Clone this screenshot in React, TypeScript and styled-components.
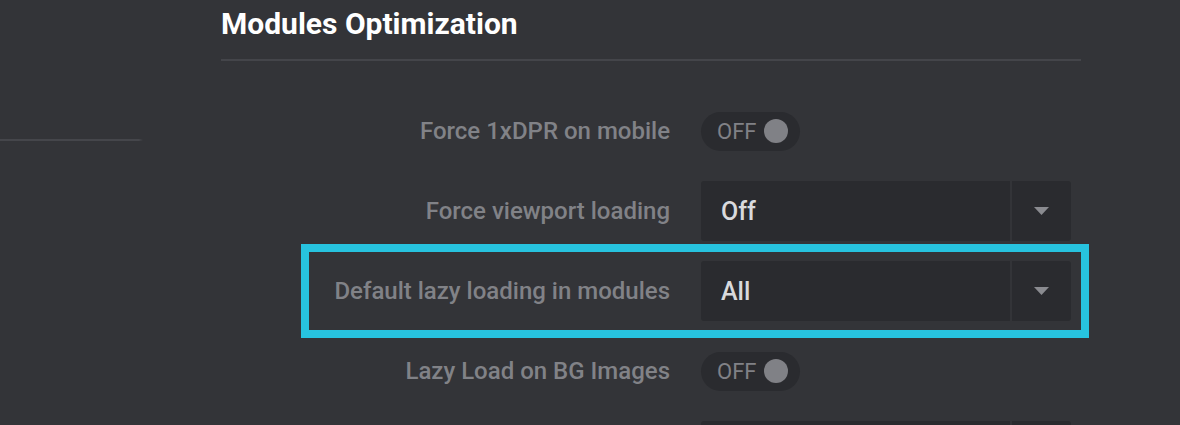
import React from "react";
import styled, { createGlobalStyle } from "styled-components";

const Global = createGlobalStyle`
  html, body { margin: 0; padding: 0; background: #333438; }
  body { font-family: Roboto, "Noto Sans", Arial, sans-serif; overflow: hidden; }
  * { box-sizing: border-box; }
`;

const Page = styled.div`
  width: 1180px;
  height: 425px;
  display: flex;
  background: #333438;
  overflow: hidden;
`;

const Sidebar = styled.aside`
  width: 143px;
  flex: none;
  padding-top: 139px;
`;

const SideRule = styled.div`
  height: 2px;
  background: linear-gradient(to right, #45464b 97%, rgba(69, 70, 75, 0));
`;

const Main = styled.main`
  margin-left: 78px;
  width: 860px;
  flex: none;
`;

const Title = styled.h2`
  margin: 0;
  padding-top: 4px;
  height: 61px;
  font-size: 30px;
  line-height: 40px;
  font-weight: 700;
  color: #ffffff;
  border-bottom: 2px solid #44454a;
`;

const Rows = styled.div`
  margin-top: 40px;
  display: flex;
  flex-direction: column;
  gap: 20px;
`;

const Row = styled.div<{ $highlight?: boolean }>`
  position: relative;
  height: 60px;
  display: grid;
  grid-template-columns: 449px 370px;
  column-gap: 31px;
  align-items: center;
  ${(p) =>
    p.$highlight &&
    `
    &::after {
      content: "";
      position: absolute;
      left: 80px;
      right: -8px;
      top: -17px;
      bottom: -17px;
      border: 8px solid #27c3df;
      pointer-events: none;
    }
  `}
`;

const Label = styled.label`
  text-align: right;
  font-size: 24px;
  font-weight: 500;
  color: #818287;
`;

const Toggle = styled.div`
  width: 99px;
  height: 39px;
  border-radius: 20px;
  background: #2a2b2f;
  display: flex;
  align-items: center;
  padding-left: 16px;
  gap: 8px;
  font-size: 22px;
  color: #808186;
`;

const Knob = styled.span`
  width: 24px;
  height: 24px;
  border-radius: 50%;
  background: #808186;
`;

const Select = styled.div`
  width: 370px;
  height: 60px;
  border-radius: 3px;
  background: #2a2b2f;
  display: flex;
  align-items: stretch;
`;

const Value = styled.span`
  flex: 1;
  padding-left: 20px;
  display: flex;
  align-items: center;
  font-size: 25px;
  font-weight: 500;
  color: #d9dadd;
`;

const Arrow = styled.span`
  width: 61px;
  border-left: 2px solid #333438;
  display: flex;
  align-items: center;
  justify-content: center;
`;

const Caret = () => (
  <svg width="15" height="8" viewBox="0 0 15 8">
    <path d="M0 0 H15 L7.5 8 Z" fill="#8a8b90" />
  </svg>
);

const SelectBox = ({ value }: { value: string }) => (
  <Select>
    <Value>{value}</Value>
    <Arrow>
      <Caret />
    </Arrow>
  </Select>
);

const ToggleOff = () => (
  <div>
    <Toggle>
      OFF
      <Knob />
    </Toggle>
  </div>
);

export default function App() {
  return (
    <Page>
      <Global />
      <Sidebar>
        <SideRule />
      </Sidebar>
      <Main>
        <Title>Modules Optimization</Title>
        <Rows>
          <Row>
            <Label>Force 1xDPR on mobile</Label>
            <ToggleOff />
          </Row>
          <Row>
            <Label>Force viewport loading</Label>
            <SelectBox value="Off" />
          </Row>
          <Row $highlight>
            <Label>Default lazy loading in modules</Label>
            <SelectBox value="All" />
          </Row>
          <Row>
            <Label>Lazy Load on BG Images</Label>
            <ToggleOff />
          </Row>
          <Row>
            <Label />
            <SelectBox value="" />
          </Row>
        </Rows>
      </Main>
    </Page>
  );
}
